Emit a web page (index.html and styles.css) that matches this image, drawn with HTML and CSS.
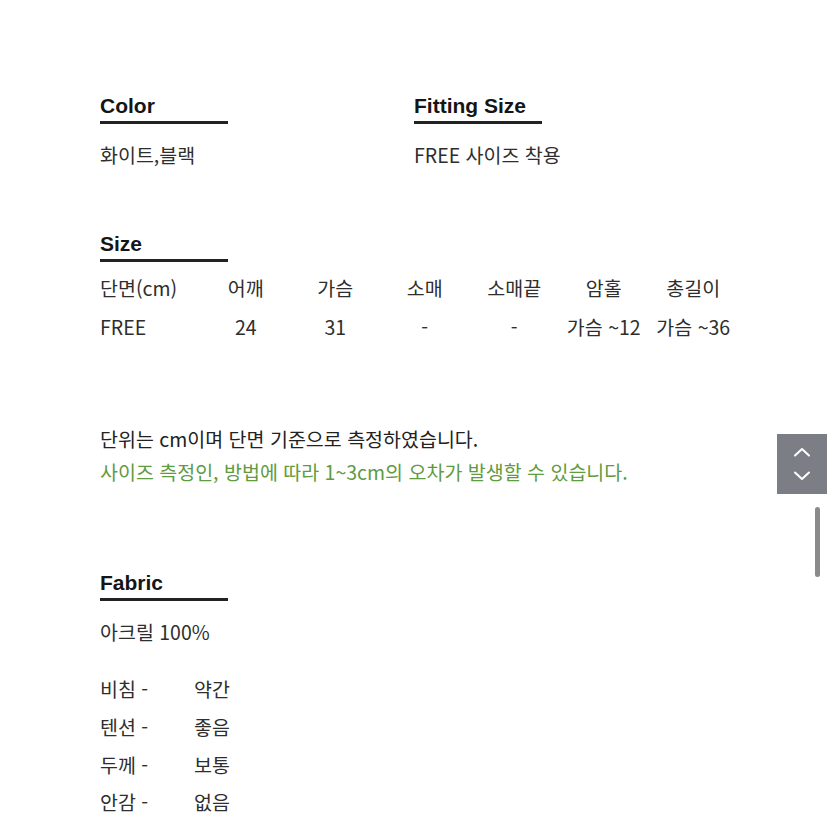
FILE: index.html
```html
<!DOCTYPE html>
<html lang="ko">
<head>
<meta charset="utf-8">
<title>상품 정보</title>
<link rel="stylesheet" href="styles.css">
</head>
<body>
<main class="page">
  <section class="pair">
    <div class="block">
      <h2 class="head">Color</h2>
      <p class="txt">화이트,블랙</p>
    </div>
    <div class="block">
      <h2 class="head">Fitting Size</h2>
      <p class="txt">FREE 사이즈 착용</p>
    </div>
  </section>

  <section class="size">
    <h2 class="head">Size</h2>
    <div class="table">
      <div class="cell first">단면(cm)</div>
      <div class="cell">어깨</div>
      <div class="cell">가슴</div>
      <div class="cell">소매</div>
      <div class="cell">소매끝</div>
      <div class="cell">암홀</div>
      <div class="cell">총길이</div>
      <div class="cell first">FREE</div>
      <div class="cell">24</div>
      <div class="cell">31</div>
      <div class="cell">-</div>
      <div class="cell">-</div>
      <div class="cell">가슴 ~12</div>
      <div class="cell">가슴 ~36</div>
    </div>
  </section>

  <section class="notes">
    <p class="note">단위는 cm이며 단면 기준으로 측정하였습니다.</p>
    <p class="note green">사이즈 측정인, 방법에 따라 1~3cm의 오차가 발생할 수 있습니다.</p>
  </section>

  <section class="fabric">
    <h2 class="head">Fabric</h2>
    <p class="txt">아크릴 100%</p>
    <div class="props">
      <span>비침 -</span><span>약간</span>
      <span>텐션 -</span><span>좋음</span>
      <span>두께 -</span><span>보통</span>
      <span>안감 -</span><span>없음</span>
    </div>
  </section>
</main>

<div class="scroll-btn">
  <svg width="18" height="10" viewBox="0 0 18 10"><path d="M2 8.5 L9 2 L16 8.5" fill="none" stroke="#fff" stroke-width="2" stroke-linecap="round" stroke-linejoin="round"/></svg>
  <svg width="18" height="10" viewBox="0 0 18 10"><path d="M2 1.5 L9 8 L16 1.5" fill="none" stroke="#fff" stroke-width="2" stroke-linecap="round" stroke-linejoin="round"/></svg>
</div>
<div class="scrollbar"></div>
</body>
</html>
```

FILE: styles.css
```css
html, body {
  margin: 0;
  padding: 0;
  background: #fff;
}
body {
  font-family: "Noto Sans CJK KR", "Noto Sans", sans-serif;
  color: #2e2e2e;
  width: 827px;
  height: 827px;
  overflow: hidden;
}
.page {
  padding: 94px 0 0 100px;
}
p, h2 { margin: 0; }

.head {
  font-family: "Liberation Sans", Arial, sans-serif;
  font-weight: bold;
  font-size: 21px;
  line-height: 24px;
  color: #151515;
  width: 128px;
  padding-bottom: 3px;
  border-bottom: 3px solid #222;
}
.txt {
  font-size: 19.5px;
  line-height: 26px;
  margin-top: 18px;
}

.pair {
  display: flex;
}
.pair .block { width: 314px; }

.size { margin-top: 64px; }
.table {
  display: grid;
  grid-template-columns: 101px repeat(6, 89.5px);
  grid-auto-rows: 39px;
  margin-top: 6px;
  font-size: 19.5px;
}
.cell {
  display: flex;
  align-items: center;
  justify-content: center;
  white-space: nowrap;
}
.cell.first { justify-content: flex-start; }

.notes { margin-top: 76px; }
.note {
  font-size: 19.5px;
  line-height: 33px;
  color: #222;
}
.note.green { color: #5f9b3f; }

.fabric { margin-top: 83px; }
.props {
  display: grid;
  grid-template-columns: 94px auto;
  grid-auto-rows: 37.7px;
  align-items: center;
  margin-top: 25px;
  font-size: 19.5px;
}

.scroll-btn {
  position: absolute;
  left: 777px;
  top: 434px;
  width: 50px;
  height: 60px;
  background: #7b7f85;
  display: flex;
  flex-direction: column;
  align-items: center;
  justify-content: center;
  gap: 14px;
}
.scrollbar {
  position: absolute;
  left: 815px;
  top: 507px;
  width: 5px;
  height: 70px;
  border-radius: 3px;
  background: #8a8a8a;
}
```
